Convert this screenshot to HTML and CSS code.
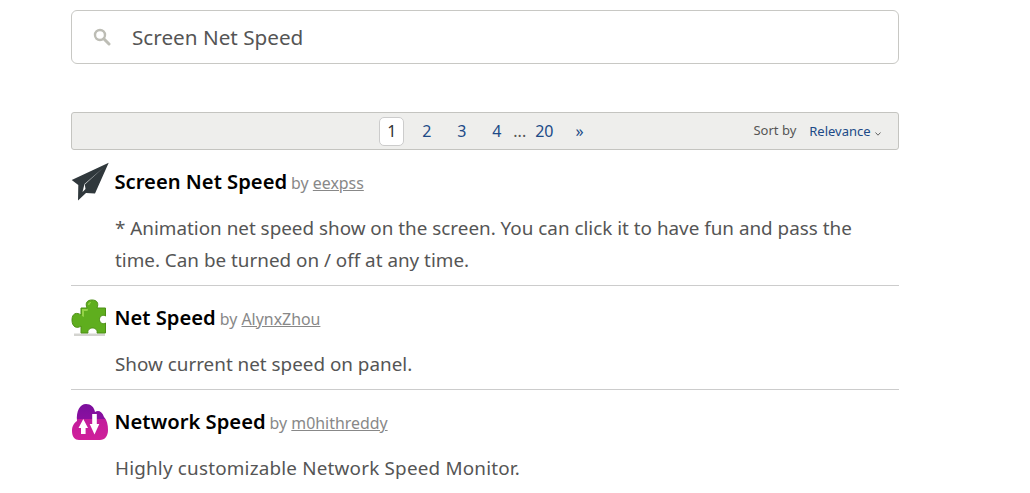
FILE: index.html
```html
<!DOCTYPE html>
<html lang="en">
<head>
<meta charset="utf-8">
<title>Extensions</title>
<link rel="stylesheet" href="styles.css">
</head>
<body>
<main class="page">
  <div class="search">
    <svg class="search-icon" viewBox="0 0 18 18" width="18" height="18" aria-hidden="true"><circle cx="7" cy="7" r="5" fill="none" stroke="#bdbdb5" stroke-width="2.400"/><path d="M10.800 10.800 16 16" stroke="#bdbdb5" stroke-width="3" stroke-linecap="round"/></svg>
    <span class="search-text">Screen Net Speed</span>
  </div>
  <nav class="pager">
    <div class="pages">
      <span class="page-current">1</span>
      <a class="page-link">2</a>
      <a class="page-link">3</a>
      <a class="page-link">4</a>
      <span class="dots">...</span>
      <a class="page-last">20</a>
      <a class="page-next">»</a>
    </div>
    <div class="sort">
      <span class="sort-label">Sort by</span>
      <a class="sort-value">Relevance <svg class="caret" viewBox="0 0 6 4" width="6" height="4" aria-hidden="true"><path d="M.5.5 3 3.200 5.500.5" fill="none" stroke="#555" stroke-width=".9"/></svg></a>
    </div>
  </nav>
  <ul class="results">
    <li class="result result-first">
      <div class="head">
        <svg class="icon" viewBox="0 0 38 40" width="38" height="40" aria-hidden="true"><path fill="#30383c" d="M37.700.700.700 18l6.600 5L7 38.500l8-7.500 9 .5Z"/><path fill="#fff" d="M32 6 13.500 22 11.500 30l3-3-.7-4.500Z"/></svg>
        <span class="name">Screen Net Speed</span><span class="by">by <a class="author">eexpss</a></span>
      </div>
      <p class="desc">* Animation net speed show on the screen. You can click it to have fun and pass the time. Can be turned on / off at any time.</p>
    </li>
    <li class="result">
      <div class="head">
        <svg class="icon" viewBox="0 0 38 40" width="38" height="40" aria-hidden="true"><path fill="#d4d4d0" d="M3 35.500h31v2.500H3Z"/><path fill="#5fae1e" stroke="#4d8f15" d="M10 10h6C14 5 16 2 21 2s7 3 5 8h8.500v8c-2-1.500-6-.5-6 3.500s4 5 6 3.500v10H26c1-3-2-5-4.500-5s-5.500 2-4.500 5h-7v-7c-4 3-9 1-9-6s5-8 9-5Z"/><path fill="#93d246" d="M11 11h6l-.5 2H13v6l-2-1ZM20 4c-2 0-3 1-3 3h1.500c0-1 .5-2 1.500-2Z"/></svg>
        <span class="name">Net Speed</span><span class="by">by <a class="author">AlynxZhou</a></span>
      </div>
      <p class="desc">Show current net speed on panel.</p>
    </li>
    <li class="result result-last">
      <div class="head">
        <svg class="icon" viewBox="0 0 38 40" width="38" height="40" aria-hidden="true"><defs><linearGradient id="cloud" x1="0" y1="0" x2="0" y2="1"><stop offset="0" stop-color="#7b0f9c"/><stop offset=".42" stop-color="#8a0fa0"/><stop offset=".43" stop-color="#c21c9c"/><stop offset="1" stop-color="#d0209a"/></linearGradient></defs><path fill="url(#cloud)" d="M8 38C4 38 1 35 1 29c0-5 2-8 5-10C5 9 9 2 15 2c5 0 8 3 9 8 3-2 7-1 9 5 3 3 4 8 4 13 0 6-3 10-8 10Z"/><path fill="#fff" d="M12.300 17 7.500 26H10v6h4.600v-6H17ZM23.500 32.500 28.300 22h-2.500V12h-4.600v10h-2.500Z"/></svg>
        <span class="name">Network Speed</span><span class="by">by <a class="author">m0hithreddy</a></span>
      </div>
      <p class="desc desc-wide">Highly customizable Network Speed Monitor.</p>
    </li>
  </ul>
</main>
</body>
</html>
```
FILE: styles.css
```css
* { box-sizing: border-box; }
html, body { margin: 0; height: 100%; overflow: hidden; background: #fff; }
body { font-family: "Noto Sans", sans-serif; color: #555; }
a { cursor: pointer; }
.page { width: 828px; margin-left: 71px; padding-top: 10px; }
.search { height: 54px; border: 1px solid #c8c8c4; border-radius: 6px; display: flex; align-items: center; padding-left: 21px; gap: 21px; }
.search-icon { flex: none; }
.search-text { font-size: 20.7px; color: #555; }
.pager { position: relative; margin-top: 48px; height: 38px; background: #eeeeec; border: 1px solid #c4c4c0; border-radius: 3px; display: flex; align-items: center; justify-content: center; }
.pages { display: flex; align-items: center; font-size: 16px; color: #204a87; padding-right: 7px; }
.page-current { width: 25px; height: 29px; background: #fff; border: 1px solid #ccc; border-radius: 5px; display: flex; align-items: center; justify-content: center; color: #333; margin-right: 10px; }
.page-link { width: 25px; margin-right: 10px; text-align: center; }
.page-link:nth-of-type(3) { margin-right: 4px; }
.dots { color: #555; margin-right: 9px; }
.page-last { margin-right: 22px; }
.sort { position: absolute; right: 17px; top: 0; bottom: 0; display: flex; align-items: center; gap: 13px; font-size: 13px; }
.sort-label { color: #555; position: relative; top: -1px; }
.sort-value { color: #204a87; }
.caret { margin-left: 1px; }
.results { list-style: none; margin: 0; padding: 0; }
.result { border-bottom: 1px solid #ccc; height: 104px; padding-top: 12px; }
.result-first { height: 136px; }
.result-last { border-bottom: 0; }
.head { display: flex; align-items: center; height: 40px; white-space: pre; }
.icon { flex: none; margin-right: 5.5px; }
.name { font-size: 20.2px; font-weight: 600; color: #000; margin-bottom: 2px; }
.by { font-size: 15.9px; color: #888; margin-left: 4px; position: relative; top: 1px; }
.author { color: #888; text-decoration: underline; }
.desc { margin: 10px 0 0 44px; font-size: 18.85px; line-height: 32px; color: #555; }
.desc-wide { letter-spacing: .2px; }
```
